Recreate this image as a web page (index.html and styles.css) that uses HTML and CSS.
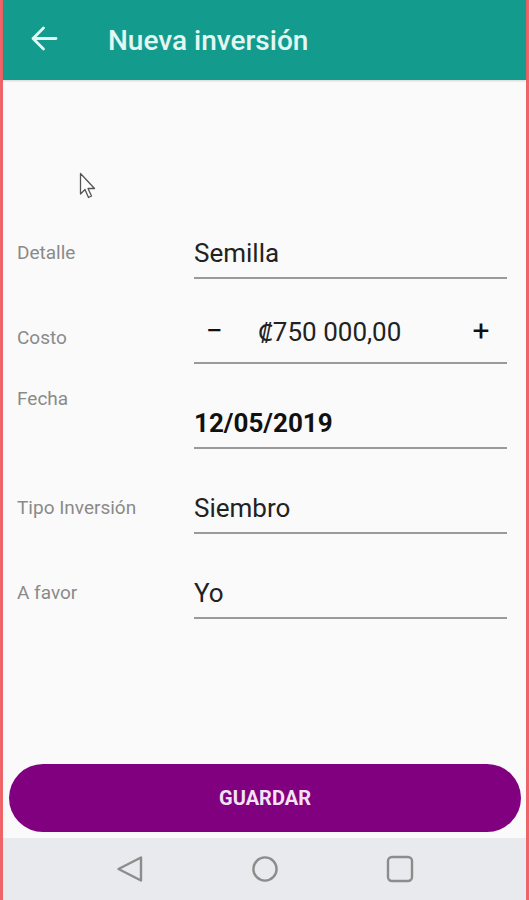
FILE: index.html
```html
<!DOCTYPE html>
<html lang="es">
<head>
    <meta charset="UTF-8">
    <meta name="viewport" content="width=device-width, initial-scale=1.0">
    <title>Nueva inversión</title>
    <link rel="stylesheet" href="styles.css">
</head>
<body>
    <div class="phone">
        <header class="toolbar">
            <svg class="back" width="28" height="26" viewBox="0 0 28 26">
                <path d="M26 12.5H3 M13.5 2 L3 12.5 L13.5 23" fill="none" stroke="#e4f6f2" stroke-width="2.8" stroke-linecap="round" stroke-linejoin="round"/>
            </svg>
            <h1>Nueva inversión</h1>
        </header>

        <main class="content">
            <form class="form" id="inversionForm">
                <div class="row">
                    <label class="label">Detalle</label>
                    <div class="field">Semilla</div>
                </div>
                <div class="row">
                    <label class="label">Costo</label>
                    <div class="field stepper">
                        <span class="step minus">&minus;</span>
                        <span class="amount">₡750 000,00</span>
                        <span class="step plus">+</span>
                    </div>
                </div>
                <div class="row">
                    <label class="label top">Fecha</label>
                    <div class="field date">12/05/2019</div>
                </div>
                <div class="row">
                    <label class="label">Tipo Inversión</label>
                    <div class="field">Siembro</div>
                </div>
                <div class="row">
                    <label class="label">A favor</label>
                    <div class="field">Yo</div>
                </div>
            </form>

            <button class="save" type="submit" form="inversionForm">GUARDAR</button>
        </main>

        <nav class="navbar">
            <svg width="28" height="28" viewBox="0 0 28 28">
                <path d="M25 2.5 L2.5 14 L25 25.5 Z" fill="none" stroke="#8c8c8c" stroke-width="2.4" stroke-linejoin="round"/>
            </svg>
            <svg width="28" height="28" viewBox="0 0 28 28">
                <circle cx="14" cy="14" r="11.6" fill="none" stroke="#8c8c8c" stroke-width="2.4"/>
            </svg>
            <svg width="28" height="28" viewBox="0 0 28 28">
                <rect x="2" y="2" width="24" height="24" rx="4" fill="none" stroke="#8c8c8c" stroke-width="2.4"/>
            </svg>
        </nav>

        <svg class="cursor" width="20" height="30" viewBox="0 0 20 30">
            <path d="M1.5 1.5 L1.5 22 L6 17.5 L9.5 25.5 L12.5 24 L9 16.5 L15.5 16.5 Z" fill="#fff" stroke="#555" stroke-width="1.3" stroke-linejoin="round"/>
        </svg>
    </div>
</body>
</html>
```

FILE: styles.css
```css
* {
    box-sizing: border-box;
}

body {
    margin: 0;
    font-family: Roboto, "Noto Sans", Arial, sans-serif;
    background-color: #fafafa;
}

.phone {
    position: relative;
    width: 529px;
    height: 900px;
    display: flex;
    flex-direction: column;
    border-left: 3px solid #ee6468;
    border-right: 3px solid #ee6468;
    background-color: #fafafa;
}

/* Top bar */
.toolbar {
    height: 80px;
    flex-shrink: 0;
    display: flex;
    align-items: center;
    padding-left: 27px;
    background-color: #139c8e;
    box-shadow: 0 1px 2px rgba(0, 0, 0, 0.15);
}

.back {
    margin-top: -2px;
}

.toolbar h1 {
    margin: 0 0 0 50px;
    font-size: 28px;
    font-weight: 500;
    color: #e4f6f2;
}

/* Form */
.content {
    flex: 1;
    display: flex;
    flex-direction: column;
}

.form {
    padding-top: 114px;
    padding-left: 14px;
}

.row {
    height: 85px;
    display: grid;
    grid-template-columns: 177px 313px;
    align-items: end;
}

.label {
    font-size: 19px;
    color: #8a8a8a;
    line-height: 24px;
    padding-bottom: 14px;
}

.label.top {
    align-self: start;
    padding-top: 23px;
}

.field {
    height: 50px;
    display: flex;
    align-items: center;
    font-size: 26px;
    color: #222;
    border-bottom: 2px solid #9a9a9a;
}

.field.date {
    font-weight: bold;
    color: #111;
}

.stepper {
    height: 64px;
    padding-bottom: 1px;
}

.step {
    font-size: 30px;
    color: #111;
    text-align: center;
}

.minus {
    width: 40px;
}

.amount {
    margin-left: 24px;
}

.plus {
    width: 52px;
    margin-left: auto;
}

/* Save button */
.save {
    margin: auto 5px 6px 6px;
    height: 68px;
    border: none;
    border-radius: 34px;
    background-color: #800080;
    color: #f4e2f4;
    font-family: Roboto, "Noto Sans", Arial, sans-serif;
    font-size: 20px;
    font-weight: bold;
    cursor: pointer;
}

/* Android navigation */
.navbar {
    height: 62px;
    flex-shrink: 0;
    display: flex;
    justify-content: center;
    align-items: center;
    gap: 107px;
    background-color: #e9eaed;
}

.cursor {
    position: absolute;
    left: 76px;
    top: 172px;
}
```
